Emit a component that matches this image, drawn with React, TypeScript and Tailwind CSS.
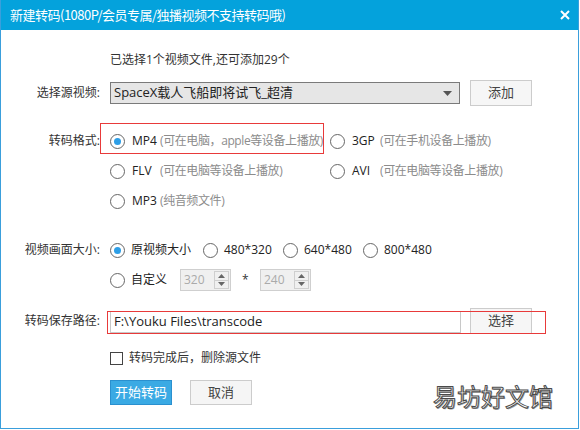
import type { ReactNode } from 'react';

const FONT = "font-['Open_Sans','Noto_Sans_CJK_SC',sans-serif]";
const CJK = "font-['Noto_Sans_CJK_SC',sans-serif]";

function Radio({ checked = false }: { checked?: boolean }) {
  return (
    <span className="w-[15px] h-[15px] shrink-0 rounded-full border border-[#666] bg-white flex items-center justify-center">
      {checked && <span className="w-[7px] h-[7px] rounded-full bg-[#2d9ee6]" />}
    </span>
  );
}

function FormatOption({ name, desc, checked }: { name: string; desc: string; checked?: boolean }) {
  return (
    <div className="flex items-center h-[30px] whitespace-nowrap">
      <Radio checked={checked} />
      <span className="ml-[7px] w-[28px] text-[#222]">{name}</span>
      <span className="text-[#8c8c8c] tracking-[-0.4px]">{desc}</span>
    </div>
  );
}

function SizeOption({ label, checked, w }: { label: string; checked?: boolean; w: string }) {
  return (
    <div className={`flex items-center ${w}`}>
      <Radio checked={checked} />
      <span className="ml-[6px] text-[#222]">{label}</span>
    </div>
  );
}

function Spinner({ value }: { value: string }) {
  return (
    <div className="w-[51px] h-[22px] border border-[#cfcfcf] bg-[#f0f0f0] flex items-center">
      <span className="flex-1 pl-[3px] text-[#aaa] leading-[20px]">{value}</span>
      <div className="w-[15px] h-[18px] mr-[1px] border border-[#cfcfcf] flex flex-col">
        <div className="flex-1 flex items-center justify-center border-b border-[#cfcfcf]">
          <svg width="7" height="4" viewBox="0 0 7 4"><path d="M0 4 L3.5 0 L7 4 Z" fill="#666" /></svg>
        </div>
        <div className="flex-1 flex items-center justify-center">
          <svg width="7" height="4" viewBox="0 0 7 4"><path d="M0 0 L3.5 4 L7 0 Z" fill="#666" /></svg>
        </div>
      </div>
    </div>
  );
}

function Row({ label, children, className = '' }: { label?: string; children: ReactNode; className?: string }) {
  return (
    <div className={`flex gap-[9px] ${className}`}>
      <div className="w-[100px] shrink-0 text-right text-[#333] pr-[1px]">{label}</div>
      <div className="flex-1">{children}</div>
    </div>
  );
}

export default function App() {
  return (
    <div className={`w-[580px] h-[430px] bg-white ${FONT} text-[12px]`}>
      <div className="relative w-[579px] h-[429px] border-x border-b border-[#3a9fdc] flex flex-col">
        {/* title bar */}
        <div className="h-[30px] bg-[#04a2dc] flex items-center justify-between pl-[9px] pr-[8px] text-white">
          <span className={`${CJK} text-[13px] tracking-[-0.5px]`}>新建转码(1080P/会员专属/独播视频不支持转码哦)</span>
          <svg width="10" height="10" viewBox="0 0 10 10">
            <path d="M1 1 L9 9 M9 1 L1 9" stroke="#fff" strokeWidth="2" />
          </svg>
        </div>

        <Row className="mt-[22px] h-[16px] items-center">
          <span className="text-[#333] leading-[16px]">已选择1个视频文件,还可添加29个</span>
        </Row>

        <Row label="选择源视频:" className="mt-[12px] h-[26px] items-center">
          <div className="flex items-center">
            <div className="w-[350px] h-[22px] border border-[#7a7a7a] bg-[#e6e6e6] flex items-center justify-between pl-[3px] pr-[7px]">
              <span className="text-[13px] text-[#222]">SpaceX载人飞船即将试飞_超清</span>
              <svg width="9" height="5" viewBox="0 0 9 5"><path d="M0 0 L9 0 L4.5 5 Z" fill="#555" /></svg>
            </div>
            <button className="ml-[10px] w-[62px] h-[26px] border border-[#ccc] bg-[#f6f6f6] text-[#444] text-[13px]">添加</button>
          </div>
        </Row>

        {/* output format */}
        <div className="mt-[20px] flex gap-[9px]">
          <div className="w-[100px] shrink-0 text-right text-[#333] h-[30px] leading-[30px] pr-[1px]">转码格式:</div>
          <div className="grid grid-cols-[220px_1fr]">
            <FormatOption name="MP4" desc="(可在电脑，apple等设备上播放)" checked />
            <FormatOption name="3GP" desc="(可在手机设备上播放)" />
            <FormatOption name="FLV" desc="(可在电脑等设备上播放)" />
            <FormatOption name="AVI" desc="(可在电脑等设备上播放)" />
            <FormatOption name="MP3" desc="(纯音频文件)" />
          </div>
        </div>

        {/* frame size */}
        <div className="mt-[19px] flex gap-[9px]">
          <div className="w-[100px] shrink-0 text-right text-[#333] h-[30px] leading-[30px] pr-[1px]">视频画面大小:</div>
          <div className="flex flex-col">
            <div className="flex items-center h-[30px]">
              <SizeOption label="原视频大小" checked w="w-[93px]" />
              <SizeOption label="480*320" w="w-[80px]" />
              <SizeOption label="640*480" w="w-[80px]" />
              <SizeOption label="800*480" w="w-[80px]" />
            </div>
            <div className="flex items-center h-[30px]">
              <SizeOption label="自定义" w="w-[70px]" />
              <Spinner value="320" />
              <span className="w-[29px] self-start mt-[6px] pl-[11px] text-[#333]">*</span>
              <Spinner value="240" />
            </div>
          </div>
        </div>

        <Row label="转码保存路径:" className="mt-[13px] h-[26px] items-center">
          <div className="flex items-center">
            <div className="w-[351px] h-[22px] mt-[1px] border border-[#c8c8c8] bg-white flex items-center pl-[3px]">
              <span className="text-[13px] text-[#222]">F:\Youku Files\transcode</span>
            </div>
            <button className="ml-[9px] w-[62px] h-[26px] border border-[#ccc] bg-[#f6f6f6] text-[#444] text-[13px]">选择</button>
          </div>
        </Row>

        <Row className="mt-[14px] h-[20px] items-center">
          <div className="flex items-center">
            <span className="w-[13px] h-[13px] border border-[#444] bg-white" />
            <span className="ml-[6px] text-[#333]">转码完成后，删除源文件</span>
          </div>
        </Row>

        <Row className="mt-[12px]">
          <div className="flex gap-[18px]">
            <button className="w-[62px] h-[25px] border border-[#2a90cf] bg-[#3aaae4] text-white text-[13px]">开始转码</button>
            <button className="w-[62px] h-[25px] border border-[#ccc] bg-[#f5f5f5] text-[#444] text-[13px]">取消</button>
          </div>
        </Row>

        {/* highlight frames */}
        <div className="absolute left-[99px] top-[123px] w-[224px] h-[31px] border border-[#e83a3a] pointer-events-none" />
        <div className="absolute left-[106px] top-[311px] w-[439px] h-[23px] border border-[#e83a3a] pointer-events-none" />

        <span className={`absolute left-[432px] top-[380px] ${CJK} text-[24px] leading-[32px] text-white [-webkit-text-stroke:1px_#4a4a4a] [text-shadow:1px_1px_0_#999]`}>易坊好文馆</span>
      </div>
    </div>
  );
}
